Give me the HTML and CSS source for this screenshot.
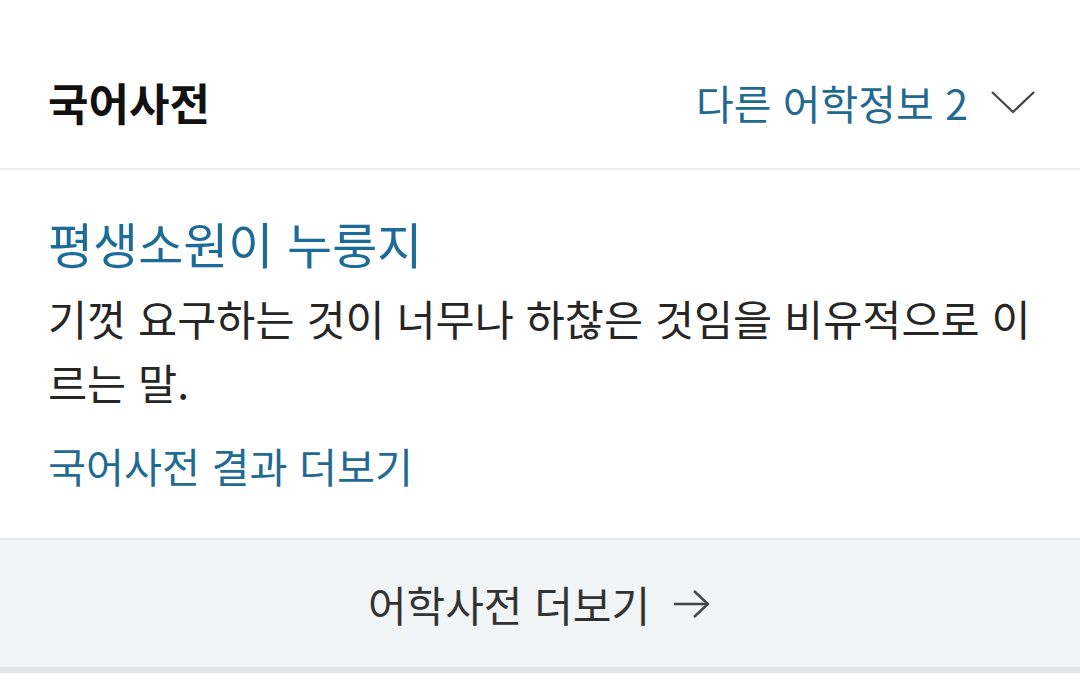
FILE: index.html
```html
<!DOCTYPE html>
<html lang="ko">
<head>
    <meta charset="UTF-8">
    <meta name="viewport" content="width=device-width, initial-scale=1.0">
    <title>국어사전</title>
    <link rel="stylesheet" href="styles.css">
</head>
<body>
    <section class="dict">
        <div class="dict-head">
            <h2 class="dict-title">국어사전</h2>
            <a href="#" class="other-info">
                <span>다른 어학정보 2</span>
                <svg class="chevron" width="46" height="26" viewBox="0 0 46 26">
                    <polyline points="2,3 23,23 44,3" fill="none" stroke="#444" stroke-width="2.2"/>
                </svg>
            </a>
        </div>
        <div class="dict-body">
            <a href="#" class="entry-word">평생소원이 누룽지</a>
            <p class="entry-mean">기껏 요구하는 것이 너무나 하찮은 것임을 비유적으로 이르는 말.</p>
            <a href="#" class="entry-more">국어사전 결과 더보기</a>
        </div>
        <a href="#" class="dict-more">
            어학사전 더보기
            <svg class="arrow" width="40" height="30" viewBox="0 0 40 30">
                <line x1="2" y1="15" x2="36" y2="15" stroke="#444" stroke-width="2.4"/>
                <polyline points="22,2 36,15 22,28" fill="none" stroke="#444" stroke-width="2.4"/>
            </svg>
        </a>
    </section>
</body>
</html>
```

FILE: styles.css
```css
body {
    margin: 0;
    background: #fff;
    font-family: "Noto Sans CJK KR", "Noto Sans", sans-serif;
    color: #222;
}
a {
    text-decoration: none;
}
.dict {
    width: 1080px;
}
.dict-head {
    display: flex;
    justify-content: space-between;
    align-items: center;
    padding: 70px 44px 34px 48px;
    border-bottom: 2px solid #eceeef;
}
.dict-title {
    margin: 0;
    font-size: 44px;
    font-weight: bold;
    line-height: 64px;
    color: #111;
}
.other-info {
    display: flex;
    align-items: center;
    gap: 22px;
    font-size: 41px;
    line-height: 64px;
    color: #22698f;
}
.dict-body {
    padding: 41px 48px 41px 48px;
}
.entry-word {
    display: block;
    font-size: 49px;
    line-height: 64px;
    color: #1c6b98;
}
.entry-mean {
    margin: 11px 0 0;
    font-size: 42.5px;
    line-height: 64px;
    color: #262626;
}
.entry-more {
    display: block;
    margin-top: 19px;
    font-size: 41.3px;
    line-height: 64px;
    color: #1f6b94;
}
.dict-more {
    display: flex;
    justify-content: center;
    align-items: center;
    gap: 22px;
    height: 127px;
    background: #f2f5f6;
    border-top: 2px solid #e7eaec;
    border-bottom: 6px solid #e2e5e7;
    font-size: 42px;
    color: #333;
}
```
